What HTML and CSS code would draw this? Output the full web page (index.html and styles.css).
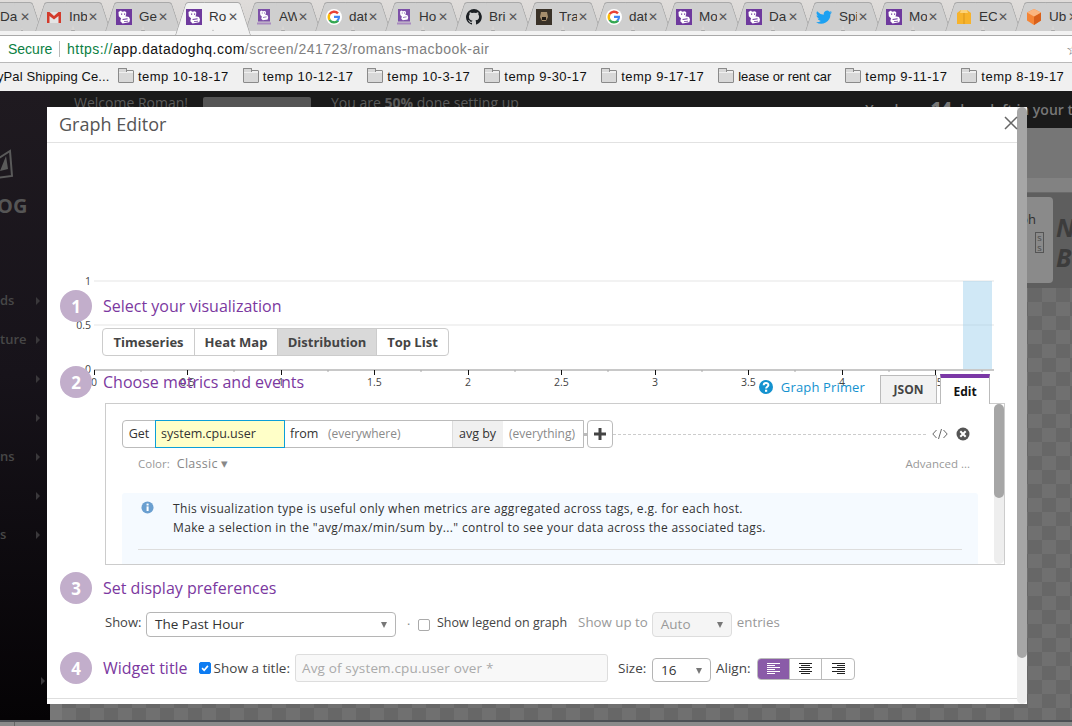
FILE: index.html
```html
<!DOCTYPE html>
<html lang="en">
<head>
<meta charset="utf-8">
<title>Graph Editor</title>
<link rel="stylesheet" href="styles.css">
</head>
<body>
<svg class="defs" width="0" height="0" aria-hidden="true">
  <symbol id="dd" viewBox="0 0 16 16">
    <rect width="16" height="16" fill="#6f3a9e"/>
    <path fill="#fff" d="M2.500 3L5 1.500 6 2.800 9 2.300 10.300 3.500 10 6.300 9.300 7.300 13 8 14 10.500 13.300 13.300 6.500 14.500 4.300 12.300 5 9.300 2.800 7.300z"/>
    <path fill="#6f3a9e" d="M5 4.500h1.200v1.200H5zM8 4.500h1.200v1.200H8zM6.500 10l5-.8.200 1-5 .8zM8 12.300l4-.6.100.8-4 .6z"/>
  </symbol>
  <symbol id="dd2" viewBox="0 0 16 16">
    <rect x="2" width="12" height="12.500" fill="#7d50a8"/>
    <path fill="#fff" d="M4 2.500L5.800 1.500 6.500 2.300 9 2 10 3l-.3 2-.5.800 2.300.5.700 2L11.700 10.500 6.800 11.300 5.300 9.800 5.800 7.500 4.300 6z"/>
    <path fill="#7d50a8" d="M5.800 3.500h.9v.9h-.9zM8 3.500h.9v.9H8zM7 8l3.500-.5.100.7-3.500.5z"/>
    <rect x="1" y="13.500" width="14" height="2" fill="#a98bc0"/>
  </symbol>
  <symbol id="goog" viewBox="0 0 16 16">
    <circle cx="8" cy="8" r="8" fill="#fff"/>
    <path fill="none" stroke="#ea4335" stroke-width="2.400" d="M12 4.400A5.300 5.300 0 0 0 3.600 5.200"/>
    <path fill="none" stroke="#fbbc05" stroke-width="2.400" d="M3.600 5.200a5.300 5.300 0 0 0 0 5.600"/>
    <path fill="none" stroke="#34a853" stroke-width="2.400" d="M3.600 10.800a5.300 5.300 0 0 0 8.600.6"/>
    <path fill="#4285f4" d="M8 6.800h6v1.200c0 1.700-.7 3.200-1.800 4.200l-1.700-1.400c.7-.5 1.100-1.100 1.300-1.800H8z"/>
  </symbol>
</svg>

<div class="tabstrip">
  <div class="tab first"><span class="tab-title">Da</span><span class="tab-x">✕</span></div>
  <div class="tab">
    <svg class="fav" viewBox="0 0 16 16"><path fill="#e4e4e4" d="M1 3h14v11H1z"/><path fill="#d33b2c" d="M1 3h2.500L8 7l4.500-4H15v11h-2.500V7L8 10.500 3.500 7v7H1z"/></svg>
    <span class="tab-title">Inb</span><span class="tab-x">✕</span></div>
  <div class="tab"><svg class="fav"><use href="#dd"/></svg><span class="tab-title">Ge</span><span class="tab-x">✕</span></div>
  <div class="tab active"><svg class="fav"><use href="#dd"/></svg><span class="tab-title">Ro</span><span class="tab-x">✕</span></div>
  <div class="tab"><svg class="fav"><use href="#dd2"/></svg><span class="tab-title">AW</span><span class="tab-x">✕</span></div>
  <div class="tab"><svg class="fav"><use href="#goog"/></svg><span class="tab-title">dat</span><span class="tab-x">✕</span></div>
  <div class="tab"><svg class="fav"><use href="#dd2"/></svg><span class="tab-title">Ho</span><span class="tab-x">✕</span></div>
  <div class="tab">
    <svg class="fav" viewBox="0 0 16 16"><path fill="#1b1f23" d="M8 0a8 8 0 0 0-2.500 15.600c.4.100.5-.2.500-.4v-1.400c-2.200.5-2.700-1-2.700-1-.4-.9-.9-1.200-.9-1.200-.7-.5.100-.5.100-.5.800.1 1.200.8 1.200.8.700 1.200 1.900.9 2.300.7.100-.5.300-.9.500-1.100-1.800-.2-3.600-.9-3.600-4 0-.9.300-1.600.8-2.100-.1-.2-.4-1 .1-2.100 0 0 .7-.2 2.200.8a7.600 7.600 0 0 1 4 0c1.500-1 2.200-.8 2.200-.8.400 1.100.2 1.900.1 2.100.5.600.8 1.300.8 2.100 0 3.100-1.900 3.700-3.700 3.900.3.300.6.800.6 1.500v2.200c0 .2.100.5.600.4A8 8 0 0 0 8 0z"/></svg>
    <span class="tab-title">Bri</span><span class="tab-x">✕</span></div>
  <div class="tab">
    <svg class="fav" viewBox="0 0 16 16"><rect width="16" height="16" fill="#3a3228"/><path fill="#a58d6c" d="M5 3h6l1 5-2 4H6L4 8z"/><path fill="#1f1a15" d="M6 8h4v3H6z"/></svg>
    <span class="tab-title">Tra</span><span class="tab-x">✕</span></div>
  <div class="tab"><svg class="fav"><use href="#goog"/></svg><span class="tab-title">dat</span><span class="tab-x">✕</span></div>
  <div class="tab"><svg class="fav"><use href="#dd"/></svg><span class="tab-title">Mo</span><span class="tab-x">✕</span></div>
  <div class="tab"><svg class="fav"><use href="#dd"/></svg><span class="tab-title">Da</span><span class="tab-x">✕</span></div>
  <div class="tab">
    <svg class="fav" viewBox="0 0 16 16"><path fill="#1da1f2" d="M16 3.200c-.6.300-1.200.4-1.900.5.700-.4 1.200-1 1.400-1.800-.6.400-1.300.7-2.100.8A3.300 3.300 0 0 0 7.800 5.700 9.300 9.300 0 0 1 1.100 2.300a3.300 3.300 0 0 0 1 4.400c-.5 0-1-.2-1.500-.4 0 1.600 1.100 2.900 2.600 3.200-.5.100-1 .2-1.500.1.400 1.300 1.600 2.200 3.100 2.300A6.600 6.600 0 0 1 0 13.200 9.300 9.300 0 0 0 14.400 5c.6-.5 1.200-1.100 1.600-1.800z"/></svg>
    <span class="tab-title">Spi</span><span class="tab-x">✕</span></div>
  <div class="tab"><svg class="fav"><use href="#dd"/></svg><span class="tab-title">Mo</span><span class="tab-x">✕</span></div>
  <div class="tab">
    <svg class="fav" viewBox="0 0 16 16"><path fill="#f7b32b" d="M1 4l4-3h6l4 3v11H1z"/><path fill="#fbd27a" d="M5 1h6l1 3H4z"/><path fill="#d9951c" d="M7.500 4h1v11h-1z"/></svg>
    <span class="tab-title">EC</span><span class="tab-x">✕</span></div>
  <div class="tab">
    <svg class="fav" viewBox="0 0 16 16"><path fill="#f58536" d="M8 0l7 3.500v8L8 16l-7-4.500v-8z"/><path fill="#d9601a" d="M8 7.500V16l7-4.500v-8z"/><path fill="#fbb57f" d="M8 0l7 3.500L8 7.500 1 3.500z"/></svg>
    <span class="tab-title">Ub</span><span class="tab-x">✕</span></div>
</div>

<div class="addressbar">
  <span class="secure">Secure</span>
  <span class="addr-sep"></span>
  <span class="url"><span class="url-https">https://</span><span class="url-host">app.datadoghq.com</span>/screen/241723/romans-macbook-air</span>
  <span class="star">☆</span>
</div>

<div class="bookmarks">
  <span class="bm-cut">yPal Shipping Ce...</span>
  <span class="bm"><span class="folder"></span>temp 10-18-17</span>
  <span class="bm"><span class="folder"></span>temp 10-12-17</span>
  <span class="bm"><span class="folder"></span>temp 10-3-17</span>
  <span class="bm"><span class="folder"></span>temp 9-30-17</span>
  <span class="bm"><span class="folder"></span>temp 9-17-17</span>
  <span class="bm bm-lease"><span class="folder"></span>lease or rent car</span>
  <span class="bm"><span class="folder"></span>temp 9-11-17</span>
  <span class="bm"><span class="folder"></span>temp 8-19-17</span>
</div>

<div class="stage">
  <aside class="sidebar">
    <div class="side-logo">
      <svg class="side-logo-mark" viewBox="0 0 14 32"><path fill="none" stroke="#5a5a5a" stroke-width="2" d="M-4 12L10 3l2 25-16 2"/><path fill="#5a5a5a" d="M0 23l6-15 2 13z"/></svg>
      <span class="side-logo-text">OG</span>
    </div>
    <ul class="side-nav">
      <li><span>ds</span><i></i></li>
      <li><span>ture</span><i></i></li>
      <li><span></span><i></i></li>
      <li><span></span><i></i></li>
      <li><span>ns</span><i></i></li>
      <li><span></span><i></i></li>
      <li><span>s</span><i></i></li>
      <li class="side-last"><span></span><i></i></li>
    </ul>
  </aside>
  <div class="backdrop">
    <div class="topbar">
      <span class="tb-text tb-welcome">Welcome Roman!</span>
      <span class="tb-btn"></span>
      <span class="tb-text tb-done">You are <b>50%</b> done setting up</span>
      <span class="tb-text tb-trial">You have <b>14</b> days left in your trial</span>
    </div>
    <div class="subbar"></div>
    <div class="ribbon"></div>
    <div class="banner">
      <div class="banner-card"><span class="card-title">Graph</span><span class="card-box">S<br>S</span></div>
      <div class="banner-note">Ni<br>Bo</div>
    </div>
    <div class="canvas"></div>
  </div>
  <div class="statusbar"><span class="status-cell"></span></div>

  <div class="modal">
    <header class="modal-head"><h1>Graph Editor</h1></header>
    <div class="graph-space"></div>
    <div class="modal-body">
      <div class="chart" aria-hidden="true">
        <div class="gridline g1"></div>
        <div class="gridline g2"></div>
        <div class="band"></div>
        <div class="axis"></div>
        <span class="ylab y1">1</span><span class="ylab y2">0.5</span><span class="ylab y3">0</span>
        <svg class="ticks" viewBox="0 0 900 6" width="900" height="6">
          <path stroke="#111" d="M.5 0v5M93.500 0v5M187.500 0v5M280.500 0v5M374.500 0v5M467.500 0v5M561.500 0v5M654.500 0v5M748.500 0v5M841.500 0v5"/>
          <path stroke="#aaa" d="M47 0v2M140 0v2M234 0v2M327 0v2M421 0v2M514 0v2M608 0v2M701 0v2M795 0v2M888 0v2"/>
        </svg>
        <span class="xlab" style="left:0">0</span>
        <span class="xlab" style="left:93.500px">0.5</span>
        <span class="xlab" style="left:187px">1</span>
        <span class="xlab" style="left:280.500px">1.5</span>
        <span class="xlab" style="left:374px">2</span>
        <span class="xlab" style="left:467.500px">2.5</span>
        <span class="xlab" style="left:561px">3</span>
        <span class="xlab" style="left:654.500px">3.5</span>
        <span class="xlab" style="left:748px">4</span>
        <span class="xlab" style="left:841.500px">4.5</span>
      </div>

      <section class="step step-1">
        <div class="step-head"><span class="num">1</span><h2>Select your visualization</h2></div>
        <div class="seg">
          <span class="seg-btn w-ts">Timeseries</span>
          <span class="seg-btn w-hm">Heat Map</span>
          <span class="seg-btn w-di on">Distribution</span>
          <span class="seg-btn w-tl">Top List</span>
        </div>
      </section>

      <section class="step step-2">
        <div class="step-head"><span class="num">2</span><h2>Choose metrics and events</h2></div>
        <div class="tabs-row">
          <a class="primer"><svg class="primer-ic" viewBox="0 0 16 16"><circle cx="8" cy="8" r="7" fill="#1492cf"/><path fill="none" stroke="#fff" stroke-width="2" d="M5.700 6.200c0-3 4.700-3 4.700-.2 0 1.700-2.300 1.700-2.300 3.600"/><rect x="7" y="10.700" width="2.200" height="2.100" fill="#fff"/></svg>Graph Primer</a>
          <span class="ptab">JSON</span>
          <span class="ptab ptab-on">Edit</span>
        </div>
        <div class="panel">
          <div class="panel-scroll"><div class="panel-thumb"></div></div>
          <div class="query">
            <div class="qbox">
              <span class="q-get">Get</span>
              <span class="q-metric">system.cpu.user</span>
              <span class="q-from">from</span>
              <span class="q-ph q-where">(everywhere)</span>
              <span class="q-avg">avg by</span>
              <span class="q-ph q-every">(everything)</span>
            </div>
            <span class="q-conn"></span>
            <span class="q-plus"><svg viewBox="0 0 12 12"><path fill="#444" d="M4.500 0h3v4.500H12v3H7.500V12h-3V7.500H0v-3h4.500z"/></svg></span>
            <span class="q-dash"></span>
            <svg class="q-code" viewBox="0 0 16 12"><path fill="none" stroke="#666" d="M4.500 2L.8 6l3.700 4M11.500 2l3.700 4-3.700 4M9.500 1l-3 10"/></svg>
            <svg class="q-close" viewBox="0 0 14 14"><circle cx="7" cy="7" r="6.500" fill="#555"/><path stroke="#fff" stroke-width="2" d="M4.300 4.300l5.400 5.400M9.700 4.300L4.300 9.700"/></svg>
          </div>
          <div class="q-opts"><span class="q-color">Color:</span><span class="q-classic">Classic ▾</span><span class="q-adv">Advanced ...</span></div>
          <div class="info">
            <div class="info-row">
              <svg class="info-ic" viewBox="0 0 14 14"><circle cx="7" cy="7" r="6.500" fill="#6a9fd0"/><rect x="6" y="5.800" width="2.200" height="5" fill="#fff"/><rect x="6" y="2.800" width="2.200" height="2" fill="#fff"/></svg>
              <p>This visualization type is useful only when metrics are aggregated across tags, e.g. for each host.<br>Make a selection in the "avg/max/min/sum by..." control to see your data across the associated tags.</p>
            </div>
            <hr class="info-rule">
          </div>
        </div>
      </section>

      <section class="step step-3">
        <div class="step-head"><span class="num">3</span><h2>Set display preferences</h2></div>
        <div class="prefs">
          <span class="lab lab-showing">Show:</span>
          <span class="sel sel-time">The Past Hour<i class="caret"></i></span>
          <span class="dot">·</span>
          <span class="cb"></span>
          <span class="lab lab-legend">Show legend on graph</span>
          <span class="lab lab-dim lab-upto">Show up to</span>
          <span class="sel sel-auto">Auto<i class="caret"></i></span>
          <span class="lab lab-dim lab-entries">entries</span>
        </div>
      </section>

      <section class="step step-4">
        <div class="step-head step-head-inline">
          <span class="num">4</span><h2>Widget title</h2>
          <span class="cb cb-on"><svg viewBox="0 0 12 12"><path fill="none" stroke="#fff" stroke-width="2" d="M2.500 6.200l2.500 2.500 4.500-5.200"/></svg></span>
          <span class="lab lab-show">Show a title:</span>
          <span class="title-input">Avg of system.cpu.user over *</span>
          <span class="lab lab-size">Size:</span>
          <span class="sel sel-size">16<i class="caret"></i></span>
          <span class="lab lab-align">Align:</span>
          <div class="align">
            <span class="al al-on"><svg viewBox="0 0 13 12"><path stroke="#fff" d="M0 .5h13M0 2.500h8M0 4.500h13M0 6.500h8M0 8.500h13M0 10.500h8"/></svg></span>
            <span class="al"><svg viewBox="0 0 13 12"><path stroke="#222" d="M0 .5h13M2 2.500h9M0 4.500h13M2 6.500h9M0 8.500h13M2 10.500h9"/></svg></span>
            <span class="al"><svg viewBox="0 0 13 12"><path stroke="#222" d="M0 .5h13M5 2.500h8M0 4.500h13M5 6.500h8M0 8.500h13M5 10.500h8"/></svg></span>
          </div>
        </div>
      </section>
    </div>
    <div class="modal-foot"></div>
    <div class="modal-scroll"><div class="modal-thumb"></div></div>
    <svg class="modal-x" viewBox="0 0 14 14"><path fill="none" stroke="#666" stroke-width="1.500" d="M1 1l12 12M13 1L1 13"/></svg>
  </div>
</div>
</body>
</html>
```

FILE: styles.css
```css
* { box-sizing: border-box; }
html, body { margin: 0; padding: 0; height: 100%; overflow: hidden; }
body { width: 1072px; height: 726px; display: flex; flex-direction: column; font-family: "Open Sans", "Liberation Sans", sans-serif; background: #fff; }
.defs { position: absolute; }

/* browser tabs */
.tabstrip { height: 36px; flex: none; display: flex; background: linear-gradient(#dfdcda, #d6d4d2); border-bottom: 1px solid #a9a9a9; overflow: hidden; position: relative; box-shadow: inset 0 -4px 0 #f2f2f2, inset 0 -5px 0 #a9a9a9; font-family: "Liberation Sans", sans-serif; }
.tab { position: relative; flex: 0 0 70px; height: 29px; margin-top: 2px; display: flex; align-items: center; padding-left: 11px; font-size: 13.500px; color: #333; }
.tab::before, .tab::after { content: ""; position: absolute; top: 0; bottom: 0; width: 50%; background: #cfcfcf; border-top: 1px solid #a9a9a9; z-index: 0; }
.tab::before { left: 0; border-left: 1px solid #a9a9a9; transform: skewX(-18deg); transform-origin: bottom left; border-top-left-radius: 3px; }
.tab::after { right: -6px; border-right: 1px solid #a9a9a9; transform: skewX(18deg); transform-origin: bottom right; border-top-right-radius: 3px; }
.tab.first { flex-basis: 35px; padding-left: 0; }
.tab.first::before { left: -20px; width: 40px; }
.tab.first .tab-x { margin-left: 2px; }
.tab.active { height: 33px; z-index: 2; padding-bottom: 4px; }
.tab.active::before, .tab.active::after { background: #f2f2f2; }
.fav { width: 16px; height: 16px; flex: none; position: relative; z-index: 1; margin-right: 7px; }
.tab-title { position: relative; z-index: 1; width: 18px; overflow: hidden; white-space: nowrap; flex: none; }
.tab-x { position: relative; z-index: 1; font-size: 12px; line-height: 1; color: #555; margin-left: 1px; font-family: "DejaVu Sans", sans-serif; }

/* address bar */
.addressbar { height: 27px; flex: none; display: flex; align-items: center; background: #fff; border-bottom: 1px solid #b9b9b9; padding-left: 8px; font-family: "Liberation Sans", sans-serif; font-size: 14px; white-space: nowrap; position: relative; }
.secure { color: #0b8043; width: 44px; }
.addr-sep { width: 1px; height: 16px; background: #bbb; margin: 0 7px; }
.url { color: #808080; letter-spacing: .48px; }
.url-https { color: #0b8043; }
.url-host { color: #111; }
.star { margin-left: auto; color: #777; margin-right: -8px; font-size: 16px; }

/* bookmarks */
.bookmarks { height: 28px; flex: none; display: flex; align-items: center; padding-bottom: 1px; background: #f0f0f0; font-family: "Liberation Sans", sans-serif; font-size: 13px; color: #111; white-space: nowrap; letter-spacing: .47px; overflow: hidden; }
.bm-cut { width: 121px; flex: none; margin-left: -3px; letter-spacing: .1px; }
.bm { display: flex; align-items: center; margin-right: 14px; flex: none; }
.bm-lease { letter-spacing: -.05px; }
.folder { width: 16px; height: 13px; margin-right: 4px; background: #d8d8d8; border: 1px solid #8a8a8a; border-radius: 1px; box-shadow: inset 0 2px 0 #efefef; position: relative; }
.folder::before { content: ""; position: absolute; left: -1px; top: -3px; width: 7px; height: 3px; background: #d8d8d8; border: 1px solid #8a8a8a; border-bottom: 0; border-radius: 1px 1px 0 0; }

/* page behind modal */
.stage { flex: 1; position: relative; display: grid; grid-template-columns: 50px 1fr; grid-template-rows: 1fr 6px; background: #1a1a1a; overflow: hidden; }
.sidebar { background: linear-gradient(#1f1a20 0, #17131a 45%, #050305 100%); position: relative; color: #4f4f4f; font-size: 13px; font-weight: 600; overflow: hidden; }
.side-logo { height: 147px; padding-top: 57px; display: flex; flex-direction: column; }
.side-logo-mark { width: 14px; height: 32px; flex: none; }
.side-logo-text { font-size: 20px; font-weight: 700; line-height: 24px; margin-left: -3px; margin-top: 14px; color: #555; width: 30px; }
.side-nav { list-style: none; margin: 0; padding: 43px 0 0; }
.side-nav li { height: 39px; display: flex; align-items: center; justify-content: space-between; padding-right: 10px; color: #474747; line-height: 1; }
.side-nav li.side-last { margin-top: 107px; padding-right: 5px; }
.side-nav i { border-left: 4px solid #3a383b; border-top: 4px solid transparent; border-bottom: 4px solid transparent; }
.backdrop { display: flex; flex-direction: column; min-width: 0; }
.topbar { height: 37px; flex: none; background: #1a1a1a; position: relative; color: #5b5b5b; font-size: 14px; white-space: nowrap; }
.tb-text { position: absolute; top: 2px; }
.tb-welcome { left: 24px; }
.tb-done { left: 281px; }
.tb-trial { right: -23px; font-weight: 600; color: #777; top: 9px; }
.tb-trial b { font-size: 18px; line-height: 14px; }
.tb-btn { position: absolute; left: 153px; top: 6px; width: 108px; height: 28px; background: #555; border-radius: 2px; }
.subbar { height: 50px; flex: none; background: #767676; }
.ribbon { height: 15px; flex: none; background: #828282; border-bottom: 1px solid #6a6a6a; }
.banner { height: 95px; flex: none; background: #5e5e5e; padding-top: 4px; display: flex; }
.banner-card { width: 1003px; height: 86px; flex: none; background: #8a8a8a; border-radius: 0 4px 4px 0; display: flex; flex-direction: column; align-items: flex-end; padding: 13px 17px 0 0; font-size: 13px; line-height: 18px; color: #2e2e2e; }
.card-box { width: 9px; height: 21px; margin: 4px -8px 0 0; font-size: 8px; line-height: 10px; border: 1px solid #555; color: #444; text-align: center; }
.banner-note { margin: 15px 0 0 3px; font-size: 25px; font-weight: 700; font-style: italic; line-height: 30px; color: #3c3c3c; white-space: nowrap; }
.canvas { flex: 1; border-left: 12px solid #787878; background-color: #6c6c6c; background-image: repeating-conic-gradient(#676767 0 25%, #707070 0 50%); background-size: 28px 28px; }
.statusbar { grid-column: 1 / -1; background: #8a8a8a; border-top: 2px solid #4c4f54; display: flex; }
.status-cell { width: 15px; border-right: 1px solid #666; }

/* modal */
.modal { position: absolute; left: 47px; top: 16px; width: 980px; height: 597px; background: #fff; display: flex; flex-direction: column; overflow: hidden; }
.modal-head { height: 36px; flex: none; border-bottom: 1px solid #e2e2e2; display: flex; align-items: center; padding: 0 0 2px 12px; }
.modal-head h1 { margin: 0; font-size: 18px; font-weight: 400; color: #555; }
.modal-x { position: absolute; right: 9px; top: 9px; width: 14px; height: 14px; }
.graph-space { height: 147px; flex: none; }
.modal-body { flex: 1; position: relative; min-height: 0; }
.modal-foot { height: 6px; flex: none; border-top: 1px solid #dedede; }
.modal-scroll { position: absolute; right: 0; top: 0; bottom: 0; width: 10px; background: #eee; border-radius: 0 0 5px 5px; }
.modal-thumb { height: 551px; background: #a6a6a6; border-radius: 5px; }

/* chart overlays the form */
.chart { position: absolute; left: 47px; top: -10px; width: 900px; height: 110px; font-size: 10.500px; color: #444; }
.band { position: absolute; left: 869px; top: 1px; width: 29px; height: 88px; background: rgba(150, 205, 235, .45); }
.gridline { position: absolute; left: 0; width: 900px; height: 2px; background: #f2f2f2; }
.g1 { top: 0; }
.g2 { top: 44px; }
.axis { position: absolute; left: 0; top: 89px; width: 900px; height: 2px; background: #c8c8c8; }
.ylab { position: absolute; width: 30px; text-align: right; left: -33px; line-height: 12px; }
.y1 { top: -5px; }
.y2 { top: 39px; }
.y3 { top: 83px; }
.ticks { position: absolute; left: 0; top: 90px; }
.xlab { position: absolute; top: 96px; width: 30px; margin-left: -15px; text-align: center; line-height: 12px; }

/* steps */
.step { position: absolute; left: 13px; right: 20px; }
.step-1 { top: 0; }
.step-2 { top: 76px; }
.step-3 { top: 282px; }
.step-4 { top: 362px; }
.step-head { display: flex; align-items: center; height: 32px; }
.num { width: 32px; height: 32px; border-radius: 50%; background: #c2aecb; color: #fff; font-size: 17px; font-weight: 700; display: flex; align-items: center; justify-content: center; margin-right: 11px; flex: none; position: relative; z-index: 1; }
h2 { margin: 0; font-size: 16px; font-weight: 400; color: #7b38a0; white-space: nowrap; position: relative; z-index: 1; }

.seg { position: relative; margin: 6px 0 0 42px; display: inline-flex; height: 28px; border: 1px solid #ccc; border-radius: 4px; background: #fff; overflow: hidden; font-size: 13px; font-weight: 700; color: #444; }
.seg-btn { display: flex; align-items: center; justify-content: center; border-right: 1px solid #ccc; }
.seg-btn:last-child { border-right: 0; }
.seg-btn.on { background: #d9d9d9; }
.w-ts { width: 92px; }
.w-hm { width: 83px; }
.w-di { width: 99px; }
.w-tl { width: 71px; }

.tabs-row { position: absolute; top: 8px; left: 45px; width: 900px; height: 29px; display: flex; align-items: flex-end; justify-content: flex-end; padding-right: 15px; }
.primer { display: flex; align-items: center; color: #1492cf; font-size: 13px; letter-spacing: .15px; margin: 0 15px 4px 0; align-self: center; position: relative; }
.primer-ic { width: 16px; height: 16px; margin-right: 7px; }
.ptab { position: relative; height: 28px; width: 57px; margin-right: 3px; background: #f2f2f2; border: 1px solid #bbb; border-bottom: 0; font-size: 12px; font-weight: 700; color: #444; display: flex; align-items: center; justify-content: center; }
.ptab-on { width: 50px; margin: 0 0 -1px; height: 30px; background: #fff; color: #111; border-top: 4px solid #7b38a6; z-index: 2; }

.panel { position: absolute; left: 45px; top: 37px; width: 900px; height: 162px; border: 1px solid #ccc; overflow: hidden; }
.panel-scroll { position: absolute; right: 0; top: 0; bottom: 0; width: 10px; background: #eee; border-radius: 5px; }
.panel-thumb { height: 94px; background: #a6a6a6; border-radius: 5px; }
.query { display: flex; align-items: center; height: 28px; margin: 16px 0 0 16px; font-size: 12.500px; }
.qbox { display: flex; width: 462px; height: 28px; border: 1px solid #bbb; border-radius: 4px 0 0 4px; align-items: stretch; color: #333; white-space: nowrap; }
.qbox > span { display: flex; align-items: center; padding-bottom: 1px; }
.q-get { width: 32px; justify-content: center; }
.q-metric { width: 130px; padding-left: 5px; background: #ffffc8; border: 1px solid #0b9fd8; margin: -1px 0; }
.q-from { width: 43px; padding-left: 5px; }
.q-ph { color: #8a8a8a; font-size: 12px; }
.q-where { width: 124px; }
.q-avg { width: 51px; padding-left: 6px; background: #f0f0f0; border-left: 1px solid #ddd; }
.q-every { padding-left: 6px; }
.q-conn { width: 3px; height: 3px; background: #bbb; }
.q-plus { width: 26px; height: 28px; border: 1px solid #bbb; border-radius: 4px; display: flex; align-items: center; justify-content: center; flex: none; }
.q-plus svg { width: 12px; height: 12px; }
.q-dash { width: 313px; border-top: 1px dashed #ccc; flex: none; }
.q-code { width: 16px; height: 12px; margin: 0 6px 0 6px; flex: none; }
.q-close { width: 14px; height: 14px; margin-left: 2px; flex: none; }
.q-opts { display: flex; align-items: center; margin: 7px 34px 0 32px; height: 16px; font-size: 11.500px; color: #999; }
.q-color { margin-right: 7px; }
.q-classic { font-size: 12.500px; letter-spacing: .3px; color: #888; }
.q-adv { margin-left: auto; }
.info { margin: 22px 26px 0 16px; height: 80px; background: #f5faff; border-radius: 3px; padding: 6px 16px 0; }
.info-row { display: flex; height: 50px; }
.info-ic { width: 13px; height: 13px; margin: 2px 0 0 3px; flex: none; }
.info p { margin: 0 0 0 19px; font-size: 12px; line-height: 19px; letter-spacing: .35px; color: #333; white-space: nowrap; }
.info-rule { margin: 0; border: 0; border-top: 1px solid #ddd; }

.prefs { position: absolute; top: 40px; left: 45px; display: flex; align-items: center; width: 900px; height: 25px; font-size: 12.500px; color: #444; white-space: nowrap; }
.lab { flex: none; }
.prefs .lab { margin-bottom: 5px; }
.lab-showing { width: 37px; font-size: 13px; }
.sel { position: relative; display: flex; align-items: center; height: 25px; border: 1px solid #b5b5b5; border-radius: 4px; padding: 0 0 1px 8px; font-size: 13.500px; color: #333; flex: none; background: #fff; }
.caret { position: absolute; right: 8px; top: 9px; border-top: 6px solid #777; border-left: 3px solid transparent; border-right: 3px solid transparent; }
.sel-time { width: 250px; margin-left: 4px; }
.dot { width: 3px; margin: 0 8px 0 11px; color: #888; }
.cb { width: 12px; height: 12px; border: 1px solid #aaa; border-radius: 2px; flex: none; }
.lab-legend { margin-left: 7px; }
.lab-dim { color: #999; font-size: 13.300px; }
.lab-upto { margin-left: 11px; }
.sel-auto { width: 80px; margin-left: 4px; background: #f5f5f5; color: #999; border-color: #ddd; }
.lab-entries { margin-left: 5px; }

.step-head-inline { font-size: 13.500px; color: #444; white-space: nowrap; }
.cb-on { margin-left: 11px; background: #0d7cf2; border-color: #0d7cf2; display: flex; }
.cb-on svg { width: 10px; height: 10px; }
.lab-show { margin-left: 3px; }
.title-input { position: absolute; left: 235px; top: 2px; width: 313px; height: 28px; border: 1px solid #ddd; border-radius: 3px; background: #f8f8f8; color: #aaa; font-size: 13.500px; letter-spacing: .15px; display: flex; align-items: center; padding-left: 6px; }
.lab-size { position: absolute; left: 558px; width: 30px; }
.sel-size { position: absolute; left: 592px; top: 6px; width: 59px; height: 24px; }
.lab-align { position: absolute; left: 656px; width: 36px; }
.align { position: absolute; left: 697px; top: 6px; display: flex; height: 22px; border: 1px solid #bbb; border-radius: 4px; overflow: hidden; }
.al { width: 32px; display: flex; align-items: center; justify-content: center; border-right: 1px solid #bbb; }
.al:last-child { border-right: 0; }
.al svg { width: 13px; height: 12px; }
.al-on { background: #8a5ba8; }
```
